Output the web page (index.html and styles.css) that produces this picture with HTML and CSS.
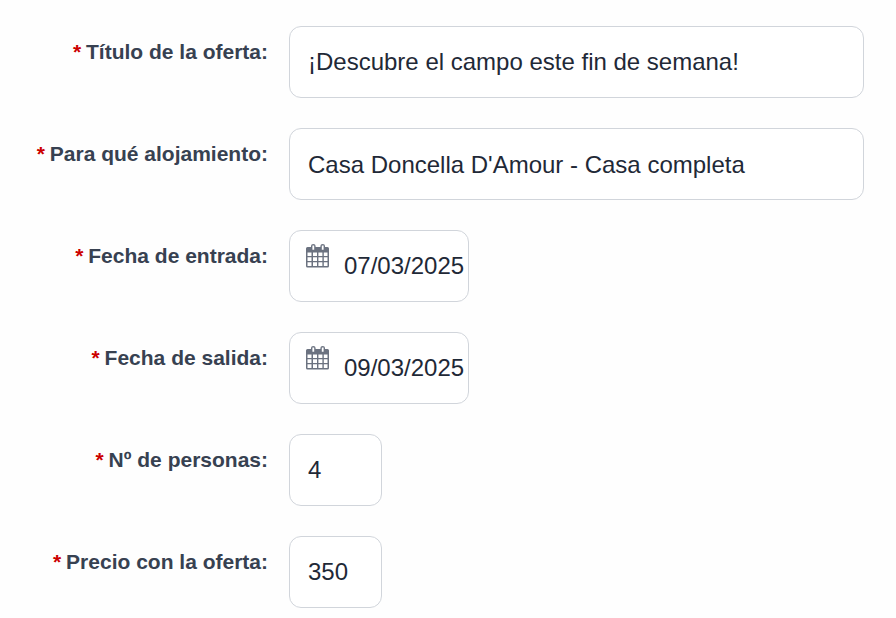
FILE: index.html
```html
<!DOCTYPE html>
<html lang="es">

<head>
	<meta charset="UTF-8">
	<meta name="viewport" content="width=device-width, initial-scale=1.0">
	<title>Oferta</title>
	<link rel="stylesheet" href="styles.css">
</head>

<body>
	<form class="offer-form">
		<div class="form-row">
			<label class="form-label" for="title"><span class="required">*</span> Título de la oferta:</label>
			<input type="text" class="field" id="title" value="¡Descubre el campo este fin de semana!">
		</div>
		<div class="form-row">
			<label class="form-label" for="lodging"><span class="required">*</span> Para qué alojamiento:</label>
			<select class="field field-select" id="lodging">
				<option selected>Casa Doncella D'Amour - Casa completa</option>
			</select>
		</div>
		<div class="form-row">
			<label class="form-label" for="checkin"><span class="required">*</span> Fecha de entrada:</label>
			<div class="field field-date">
				<svg class="calendar-icon" viewBox="0 0 24 24">
					<path fill-rule="evenodd" d="M1.500 3H5V2a2.300 2 0 0 1 4.600 0v1h4.800V2a2.300 2 0 0 1 4.600 0v1h2.500a1.500 1.500 0 0 1 1.500 1.500V22a1.500 1.500 0 0 1-1.500 1.500h-20A1.500 1.500 0 0 1 0 22V4.500A1.500 1.500 0 0 1 1.500 3zM6.400 1.600v4.100h1.800V1.600zM15.800 1.600v4.100h1.800V1.600zM1.500 8.500V12h4V8.500zM7 8.500V12h4V8.500zM12.400 8.500V12h4V8.500zM17.800 8.500V12h3.700V8.500zM1.500 13.300V17h4v-3.700zM7 13.300V17h4v-3.700zM12.400 13.300V17h4v-3.700zM17.800 13.300V17h3.700v-3.700zM1.500 18.300V22h4v-3.700zM7 18.300V22h4v-3.700zM12.400 18.300V22h4v-3.700zM17.800 18.300V22h3.700v-3.700z"/>
				</svg>
				<input type="text" class="date-input" id="checkin" value="07/03/2025">
			</div>
		</div>
		<div class="form-row">
			<label class="form-label" for="checkout"><span class="required">*</span> Fecha de salida:</label>
			<div class="field field-date">
				<svg class="calendar-icon" viewBox="0 0 24 24">
					<path fill-rule="evenodd" d="M1.500 3H5V2a2.300 2 0 0 1 4.600 0v1h4.800V2a2.300 2 0 0 1 4.600 0v1h2.500a1.500 1.500 0 0 1 1.500 1.500V22a1.500 1.500 0 0 1-1.500 1.500h-20A1.500 1.500 0 0 1 0 22V4.500A1.500 1.500 0 0 1 1.500 3zM6.400 1.600v4.100h1.800V1.600zM15.800 1.600v4.100h1.800V1.600zM1.500 8.500V12h4V8.500zM7 8.500V12h4V8.500zM12.400 8.500V12h4V8.500zM17.800 8.500V12h3.700V8.500zM1.500 13.300V17h4v-3.700zM7 13.300V17h4v-3.700zM12.400 13.300V17h4v-3.700zM17.800 13.300V17h3.700v-3.700zM1.500 18.300V22h4v-3.700zM7 18.300V22h4v-3.700zM12.400 18.300V22h4v-3.700zM17.800 18.300V22h3.700v-3.700z"/>
				</svg>
				<input type="text" class="date-input" id="checkout" value="09/03/2025">
			</div>
		</div>
		<div class="form-row">
			<label class="form-label" for="people"><span class="required">*</span> Nº de personas:</label>
			<input type="text" class="field field-short" id="people" value="4">
		</div>
		<div class="form-row">
			<label class="form-label" for="price"><span class="required">*</span> Precio con la oferta:</label>
			<input type="text" class="field field-short" id="price" value="350">
		</div>
	</form>
</body>

</html>
```
FILE: styles.css
```css
*
{
	box-sizing: border-box;
}

body
{
	margin: 0;
	background-color: #fefefe;
	font-family: "Liberation Sans", Arial, sans-serif;
}

.offer-form
{
	display: flex;
	flex-direction: column;
	gap: 30px;
	padding: 26px 32px 10px 0;
}

.form-row
{
	display: grid;
	grid-template-columns: 268px 1fr;
	column-gap: 21px;
	height: 72px;
}

.form-label
{
	padding-top: 14px;
	font-size: 21px;
	font-weight: bold;
	line-height: 24px;
	text-align: right;
	white-space: nowrap;
	color: #374151;
}

.required
{
	margin-right: -1px;
	font-size: 21px;
	color: #cc0000;
}

.field
{
	width: 100%;
	height: 72px;
	padding: 0 18px;
	border: 1px solid #d1d5db;
	border-radius: 12px;
	background-color: #ffffff;
	font-family: inherit;
	font-size: 24px;
	color: #1f2937;
}

.field-select
{
	appearance: none;
}

.field-short
{
	width: 93px;
}

.field-date
{
	display: flex;
	width: 180px;
	padding: 0 0 0 16px;
}

.calendar-icon
{
	flex: none;
	width: 24px;
	height: 24px;
	margin-top: 13px;
	fill: #6b7280;
}

.date-input
{
	width: 124px;
	margin-left: 14px;
	padding: 0;
	border: none;
	background: none;
	font-family: inherit;
	font-size: 24px;
	color: inherit;
}

input:focus,
select:focus
{
	outline: none;
	border-color: #6b7280;
}
```
